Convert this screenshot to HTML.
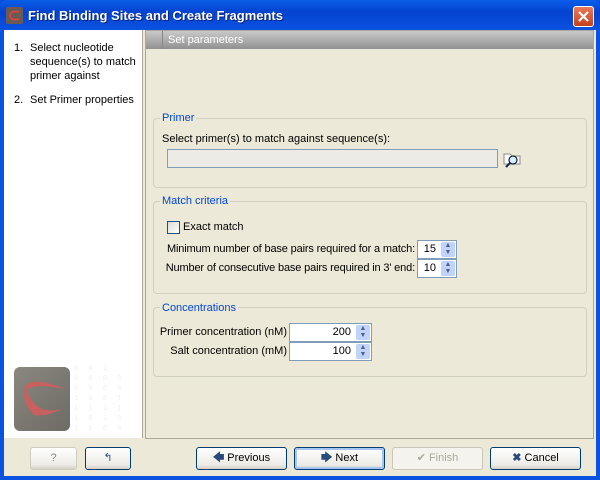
<!DOCTYPE html>
<html><head><style>
*{margin:0;padding:0;box-sizing:border-box}
body{width:600px;height:480px;overflow:hidden;font:11px "Liberation Sans",sans-serif;color:#000;position:relative;background:#0a4fd8}
.a{position:absolute;white-space:nowrap}
.win{left:0;top:0;width:600px;height:480px;background:linear-gradient(#0a5ee8,#0343d0 12px,#0a52e0 30px);border-radius:7px 7px 0 0}
.title{left:28px;top:8px;color:#fff;font-weight:bold;font-size:13px;text-shadow:1px 1px #0a1e80}
.body{left:4px;top:30px;width:592px;height:446px;background:#ece9d8}
.left{left:4px;top:30px;width:139px;height:408px;background:#fff;border-right:1px solid #aca899}
.right{left:145px;top:30px;width:449px;height:409px;border:1px solid #aca899;background:#ece9d8}
.hdr{left:146px;top:31px;width:447px;height:18px;background:linear-gradient(#c8c8c8,#a8a8a8 60%,#909090);color:#fff;padding-left:22px;line-height:18px;font-size:11px}
.grp{border:1px solid #d0d0bf;border-radius:4px}
.lg{color:#0046d5;background:#ece9d8;padding:0 2px;font-size:11px}
.in{background:#fff;border:1px solid #7f9db9;text-align:right;padding-right:20px;line-height:17px}
.spin{position:absolute;right:1px;top:1px;width:14px;height:15px;background:#c1d3fb;border-radius:2px;font-size:7px;color:#4d6185;text-align:center;line-height:7px}
.btn{border:1px solid #003c74;border-radius:3px;background:linear-gradient(#fff,#ecebe6 80%,#d6d0c5);text-align:center;line-height:21px;font-size:11px}
.r{text-align:right}
</style></head><body>
<div class="a win"></div>
<div class="a" style="left:6px;top:7px;width:17px;height:17px;background:#6a5a52;border-radius:2px"><svg width="17" height="17"><path d="M13 5Q4 3 4 9Q5 14 13 12" stroke="#d44" stroke-width="1.6" fill="none"/></svg></div>
<div class="a title">Find Binding Sites and Create Fragments</div>
<div class="a" style="left:573px;top:6px;width:21px;height:21px;background:linear-gradient(#e87a5a,#c6401c);border:1px solid #fff;border-radius:3px"><svg width="19" height="19"><path d="M5 5L14 14M14 5L5 14" stroke="#fff" stroke-width="2.2"/></svg></div>
<div class="a body"></div>
<div class="a left"></div>
<div class="a" style="left:14px;top:41px;line-height:14px">1.</div>
<div class="a" style="left:30px;top:41px;line-height:14px">Select nucleotide<br>sequence(s) to match<br>primer against</div>
<div class="a" style="left:14px;top:94px">2.</div>
<div class="a" style="left:30px;top:94px">Set Primer properties</div>
<div class="a" style="left:74px;top:364px;width:60px;height:75px;color:#f0f0f0;font:7px 'Liberation Mono',monospace;line-height:10px;letter-spacing:3px">0 0 1<br>0 0 0 0<br>0 0 0 0<br>1 0 0 1<br>1 1 1 1<br>1 0 1 0<br>1 1 0 0</div>
<div class="a" style="left:14px;top:367px;width:56px;height:64px;border-radius:6px;background:linear-gradient(135deg,#8a8780,#6d6b63)"><svg width="56" height="64"><path d="M51 22Q22 10 12 18Q6 34 20 48Q32 50 48 42Q30 46 22 38Q12 28 14 22Q22 16 51 22Z" fill="#c86060"/></svg></div>
<div class="a right"></div>
<div class="a hdr"><div class="a" style="left:16px;top:0;width:1px;height:18px;background:#888"></div>Set parameters</div>
<div class="a grp" style="left:153px;top:118px;width:434px;height:70px"></div>
<div class="a lg" style="left:160px;top:112px">Primer</div>
<div class="a" style="left:162px;top:133px">Select primer(s) to match against sequence(s):</div>
<div class="a" style="left:167px;top:149px;width:331px;height:19px;border:1px solid #7f9db9;background:#ecebe6"></div>
<svg class="a" style="left:502px;top:150px" width="20" height="18"><path d="M2 4h6l2 2h8v8H2z" fill="#fff" stroke="#888"/><circle cx="11" cy="10" r="4" fill="#ddeeff" stroke="#123" stroke-width="1.2"/><path d="M8 13l-4 4" stroke="#124" stroke-width="2"/></svg>
<div class="a grp" style="left:153px;top:201px;width:434px;height:93px"></div>
<div class="a lg" style="left:160px;top:195px">Match criteria</div>
<div class="a" style="left:167px;top:221px;width:13px;height:13px;border:1px solid #1c5180;background:linear-gradient(135deg,#dcdcd7,#fff)"></div>
<div class="a" style="left:183px;top:221px">Exact match</div>
<div class="a r" style="left:150px;width:265px;top:243px;letter-spacing:-0.15px">Minimum number of base pairs required for a match:</div>
<div class="a in" style="left:417px;top:240px;width:40px;height:19px">15<div class="spin">▲<br>▼</div></div>
<div class="a r" style="left:150px;width:265px;top:262px;letter-spacing:-0.15px">Number of consecutive base pairs required in 3' end:</div>
<div class="a in" style="left:417px;top:259px;width:40px;height:19px">10<div class="spin">▲<br>▼</div></div>
<div class="a grp" style="left:153px;top:307px;width:434px;height:70px"></div>
<div class="a lg" style="left:160px;top:302px">Concentrations</div>
<div class="a r" style="left:150px;width:137px;top:326px">Primer concentration (nM)</div>
<div class="a in" style="left:289px;top:323px;width:83px;height:19px">200<div class="spin">▲<br>▼</div></div>
<div class="a r" style="left:150px;width:137px;top:345px">Salt concentration (mM)</div>
<div class="a in" style="left:289px;top:342px;width:83px;height:19px">100<div class="spin">▲<br>▼</div></div>
<div class="a btn" style="left:30px;top:447px;width:47px;height:23px;border-color:#d0cdc0;color:#888">?</div>
<div class="a btn" style="left:85px;top:447px;width:46px;height:23px;color:#2a5090">↰</div>
<div class="a btn" style="left:196px;top:447px;width:91px;height:23px"><span style="color:#2a4a7a;font-weight:bold">🡄</span> Previous</div>
<div class="a btn" style="left:294px;top:447px;width:91px;height:23px;box-shadow:inset 0 0 0 2px #a8c4f0"><span style="color:#2a4a7a;font-weight:bold">🡆</span> Next</div>
<div class="a btn" style="left:392px;top:447px;width:91px;height:23px;border-color:#c9c7ba;color:#aca899;background:#f4f3ee">✔ Finish</div>
<div class="a btn" style="left:490px;top:447px;width:91px;height:23px"><span style="color:#2a4a7a;font-weight:bold">✖</span> Cancel</div>
</body></html>
